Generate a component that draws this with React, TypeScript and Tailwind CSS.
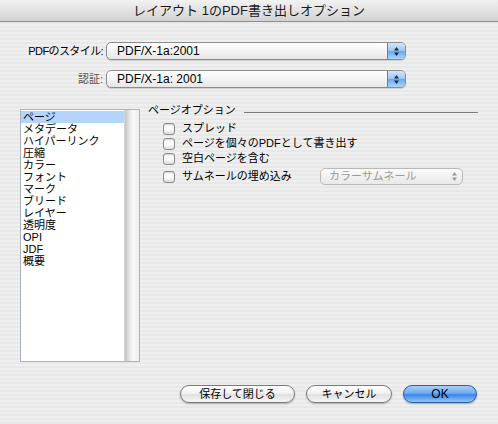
import React from 'react';

const listItems = [
  'ページ',
  'メタデータ',
  'ハイパーリンク',
  '圧縮',
  'カラー',
  'フォント',
  'マーク',
  'ブリード',
  'レイヤー',
  '透明度',
  'OPI',
  'JDF',
  '概要',
];

const options = ['スプレッド', 'ページを個々のPDFとして書き出す', '空白ページを含む'];

function Arrows({ color = '#1b2a44' }: { color?: string }) {
  return (
    <svg width="7" height="11" viewBox="0 0 7 11">
      <path d="M3.5 1 L6 4.5 L1 4.5 Z" fill={color} />
      <path d="M3.5 10 L6 6.5 L1 6.5 Z" fill={color} />
    </svg>
  );
}

function Popup({ value }: { value: string }) {
  return (
    <div className="flex h-[18px] w-[300px] overflow-hidden rounded-[5px] border border-[#8c8c8c] bg-[linear-gradient(#ffffff,#f4f4f4_50%,#e6e6e6)] shadow-[0_1px_1px_rgba(0,0,0,0.15)]">
      <div className="flex flex-1 items-center pl-[10px] text-[12px] leading-none text-black">{value}</div>
      <div className="flex w-[18px] items-center justify-center border-l border-[#5b7fb0] bg-[linear-gradient(#d3e6fb,#9cc6f3_48%,#6aa8ec_52%,#a9d6fb)]">
        <Arrows />
      </div>
    </div>
  );
}

function Checkbox({ label }: { label: string }) {
  return (
    <div className="flex items-center gap-[7px]">
      <div className="h-[12px] w-[12px] rounded-[3px] border border-[#8a8a8a] bg-[linear-gradient(#f0f0f0,#ffffff_50%,#dcdcdc)] shadow-[inset_0_1px_1px_rgba(0,0,0,0.1)]" />
      <span className="text-[11px] leading-none text-black">{label}</span>
    </div>
  );
}

function Button({ label, primary }: { label: string; primary?: boolean }) {
  return (
    <div
      className={
        primary
          ? 'flex h-[18px] w-[74px] items-center justify-center rounded-full border border-[#2d5ea6] bg-[linear-gradient(#a9d0f7,#6faaf0_45%,#3d86e6_55%,#8cc8fb)] text-[12px] text-black shadow-[0_1px_2px_rgba(0,0,0,0.3)]'
          : 'flex h-[18px] items-center justify-center rounded-full border border-[#7a7a7a] bg-[linear-gradient(#ffffff,#f2f2f2_45%,#e0e0e0_55%,#f7f7f7)] text-[11px] text-black shadow-[0_1px_2px_rgba(0,0,0,0.25)]'
      }
    >
      {label}
    </div>
  );
}

export default function App() {
  return (
    <div className="flex h-[424px] w-[498px] flex-col overflow-hidden bg-[repeating-linear-gradient(#efefef_0px,#efefef_2px,#e8e8e8_2px,#e8e8e8_4px)] font-['Liberation_Sans','Noto_Sans_CJK_JP',sans-serif] text-black">
      {/* title bar */}
      <div className="flex h-[22px] shrink-0 items-center justify-center rounded-t-[5px] border-b border-[#8e8e8e] bg-[linear-gradient(#f2f2f2,#e2e2e2_50%,#d2d2d2)] text-[13px] leading-none text-[#1a1a1a]">
        レイアウト 1のPDF書き出しオプション
      </div>

      {/* style + standard */}
      <div className="mt-[20px] flex flex-col gap-[10px]">
        <div className="flex items-center">
          <div className="w-[106px] pr-[3px] text-right text-[11px] leading-none tracking-[-0.6px]">PDFのスタイル:</div>
          <Popup value="PDF/X-1a:2001" />
        </div>
        <div className="flex items-center">
          <div className="w-[106px] pr-[3px] text-right text-[11px] leading-none text-[#555]">認証:</div>
          <Popup value="PDF/X-1a: 2001" />
        </div>
      </div>

      {/* body */}
      <div className="mt-[21px] flex pl-[20px]">
        <div className="flex h-[253px] w-[120px] border border-[#a8b4c4] bg-white">
          <div className="flex flex-1 flex-col pt-[1px]">
            {listItems.map((item, i) => (
              <div
                key={item}
                className={
                  'h-[12px] pl-[2px] text-[11px] leading-[12px] ' + (i === 0 ? 'bg-[#b5d4fb]' : '')
                }
              >
                {item}
              </div>
            ))}
          </div>
          <div className="w-[15px] border-l border-[#d4d4d4] bg-[linear-gradient(90deg,#c4c4c4,#e8e8e8_35%,#fafafa_60%,#ededed)]" />
        </div>

        <div className="-mt-[5px] ml-[8px] flex flex-1 flex-col pr-[20px]">
          <div className="flex items-center gap-[8px]">
            <span className="text-[11px] leading-[12px]">ページオプション</span>
            <div className="mt-[4px] h-px flex-1 bg-[#7a7a7a]" />
          </div>
          <div className="ml-[15px] mt-[7px] flex flex-col gap-[4px]">
            {options.map((o) => (
              <div key={o} className="flex h-[11px] items-center">
                <Checkbox label={o} />
              </div>
            ))}
            <div className="flex items-center">
              <div className="w-[157px]">
                <Checkbox label="サムネールの埋め込み" />
              </div>
              <div className="flex h-[17px] w-[143px] items-center rounded-[5px] border border-[#b8b8b8] bg-[linear-gradient(#fbfbfb,#f1f1f1_50%,#e9e9e9)]">
                <span className="flex-1 pl-[8px] text-[11px] leading-none text-[#9a9a9a]">カラーサムネール</span>
                <div className="flex w-[16px] items-center justify-center">
                  <Arrows color="#9a9a9a" />
                </div>
              </div>
            </div>
          </div>
        </div>
      </div>

      {/* buttons */}
      <div className="mt-[23px] flex justify-end gap-[11px] pr-[21px]">
        <div className="w-[115px]">
          <Button label="保存して閉じる" />
        </div>
        <div className="w-[86px]">
          <Button label="キャンセル" />
        </div>
        <Button label="OK" primary />
      </div>
    </div>
  );
}
